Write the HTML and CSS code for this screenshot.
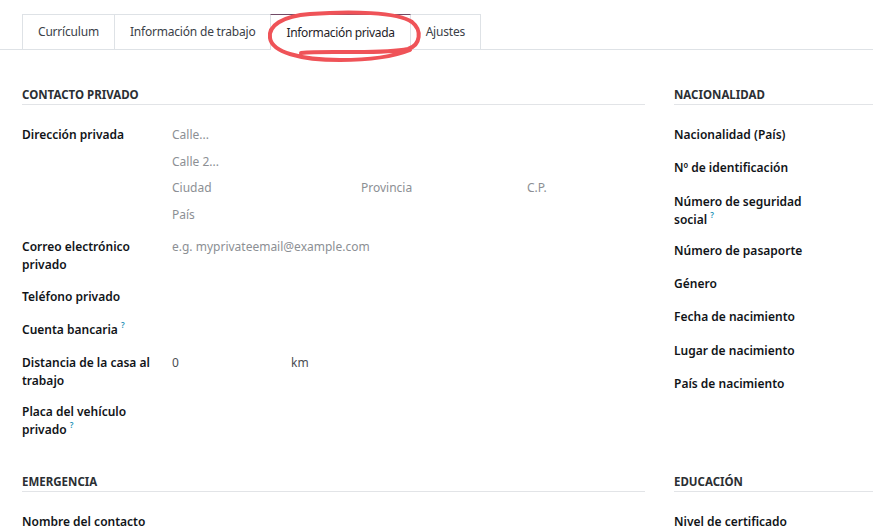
FILE: index.html
```html
<!DOCTYPE html>
<html lang="es">
<head>
<meta charset="utf-8">
<title>Información privada</title>
<link rel="stylesheet" href="styles.css">
</head>
<body>
<div class="page">
  <nav class="tabs">
    <div class="tab">Currículum</div>
    <div class="tab">Información de trabajo</div>
    <div class="tab active">Información privada</div>
    <div class="tab">Ajustes</div>
  </nav>
  <svg class="annot" width="873" height="70" viewBox="0 0 873 70" aria-hidden="true">
    <path d="M 301 53 C 330 50, 380 55, 408 49 C 421 45, 422 30, 412 22 C 398 12, 350 11, 310 14 C 282 16, 268 26, 270 38 C 272 52, 300 60, 340 60 C 370 60, 395 56, 410 50" fill="none" stroke="#ef5358" stroke-width="4" stroke-linecap="round" stroke-linejoin="round"/>
  </svg>

  <main class="sheet">
    <section class="group">
      <h2 class="group-title">Contacto privado</h2>
      <div class="row">
        <div class="label">Dirección privada</div>
        <div class="value address">
          <div class="ph">Calle...</div>
          <div class="ph">Calle 2...</div>
          <div class="addr-line">
            <div class="ph city">Ciudad</div>
            <div class="ph state">Provincia</div>
            <div class="ph zip">C.P.</div>
          </div>
          <div class="ph">País</div>
        </div>
      </div>
      <div class="row">
        <div class="label">Correo electrónico privado</div>
        <div class="value"><span class="ph">e.g. myprivateemail@example.com</span></div>
      </div>
      <div class="row">
        <div class="label">Teléfono privado</div>
        <div class="value"></div>
      </div>
      <div class="row">
        <div class="label">Cuenta bancaria <sup class="help">?</sup></div>
        <div class="value"></div>
      </div>
      <div class="row">
        <div class="label">Distancia de la casa al trabajo</div>
        <div class="value dist"><span class="num">0</span><span class="unit">km</span></div>
      </div>
      <div class="row">
        <div class="label">Placa del vehículo privado <sup class="help">?</sup></div>
        <div class="value"></div>
      </div>
    </section>

    <section class="group">
      <h2 class="group-title">Nacionalidad</h2>
      <div class="row"><div class="label">Nacionalidad (País)</div><div class="value"></div></div>
      <div class="row"><div class="label">Nº de identificación</div><div class="value"></div></div>
      <div class="row"><div class="label">Número de seguridad social <sup class="help">?</sup></div><div class="value"></div></div>
      <div class="row"><div class="label">Número de pasaporte</div><div class="value"></div></div>
      <div class="row"><div class="label">Género</div><div class="value"></div></div>
      <div class="row"><div class="label">Fecha de nacimiento</div><div class="value"></div></div>
      <div class="row"><div class="label">Lugar de nacimiento</div><div class="value"></div></div>
      <div class="row"><div class="label">País de nacimiento</div><div class="value"></div></div>
    </section>

    <section class="group">
      <h2 class="group-title">Emergencia</h2>
      <div class="row"><div class="label">Nombre del contacto</div><div class="value"></div></div>
    </section>

    <section class="group">
      <h2 class="group-title">Educación</h2>
      <div class="row"><div class="label">Nivel de certificado</div><div class="value"></div></div>
    </section>
  </main>
</div>
</body>
</html>
```

FILE: styles.css
```css
html, body {
  margin: 0;
  padding: 0;
  background: #ffffff;
}
body {
  font-family: "Noto Sans", "Open Sans", sans-serif;
  font-size: 12px;
  line-height: 18px;
  color: #1f2328;
  overflow: hidden;
}
.page {
  position: relative;
  width: 873px;
  height: 531px;
  overflow: hidden;
}
.tabs {
  display: flex;
  padding: 14px 0 0 22px;
  border-bottom: 1px solid #dee2e6;
  height: 35px;
  box-sizing: content-box;
}
.tab {
  display: flex;
  align-items: center;
  padding: 0 15px;
  height: 34px;
  font-size: 12px;
  letter-spacing: -0.2px;
  border: 1px solid #dee2e6;
  border-bottom: none;
  margin-left: -1px;
  color: #3b4148;
  background: #fff;
}
.tab:first-child { margin-left: 0; }
.tab.active {
  border-top-color: #714b67;
  color: #1f2328;
  height: 35px;
  margin-bottom: -1px;
  letter-spacing: -0.35px;
  position: relative;
  z-index: 1;
}
.annot {
  position: absolute;
  left: 0;
  top: 0;
  pointer-events: none;
  z-index: 2;
}
.sheet {
  display: grid;
  grid-template-columns: 623px 623px;
  column-gap: 29px;
  row-gap: 20px;
  padding: 36px 0 0 22px;
  width: 1400px;
}
.group-title {
  margin: 0 0 21px 0;
  font-size: 11.5px;
  font-weight: 700;
  text-transform: uppercase;
  line-height: 18px;
  color: #2b2f33;
  border-bottom: 1px solid #e2e4e7;
  padding-bottom: 0;
}
.row {
  display: flex;
  margin-bottom: 13.3px;
}
.label {
  width: 150px;
  flex: none;
  font-weight: 600;
  color: #111418;
  box-sizing: border-box;
}
.value {
  flex: 1;
  min-height: 20px;
  color: #4a4d52;
}
.ph { color: #8c8f94; }
.address {
  display: flex;
  flex-direction: column;
  gap: 8.5px;
  padding-bottom: 1.5px;
}
.addr-line { display: flex; }
.city { width: 189px; }
.state { width: 166px; }
.zip { flex: 1; }
.dist { display: flex; }
.num { width: 119px; }
.help {
  color: #1a8fb5;
  font-size: 8px;
  font-weight: 600;
  line-height: 0;
  vertical-align: baseline;
  position: relative;
  top: -6px;
}
```
